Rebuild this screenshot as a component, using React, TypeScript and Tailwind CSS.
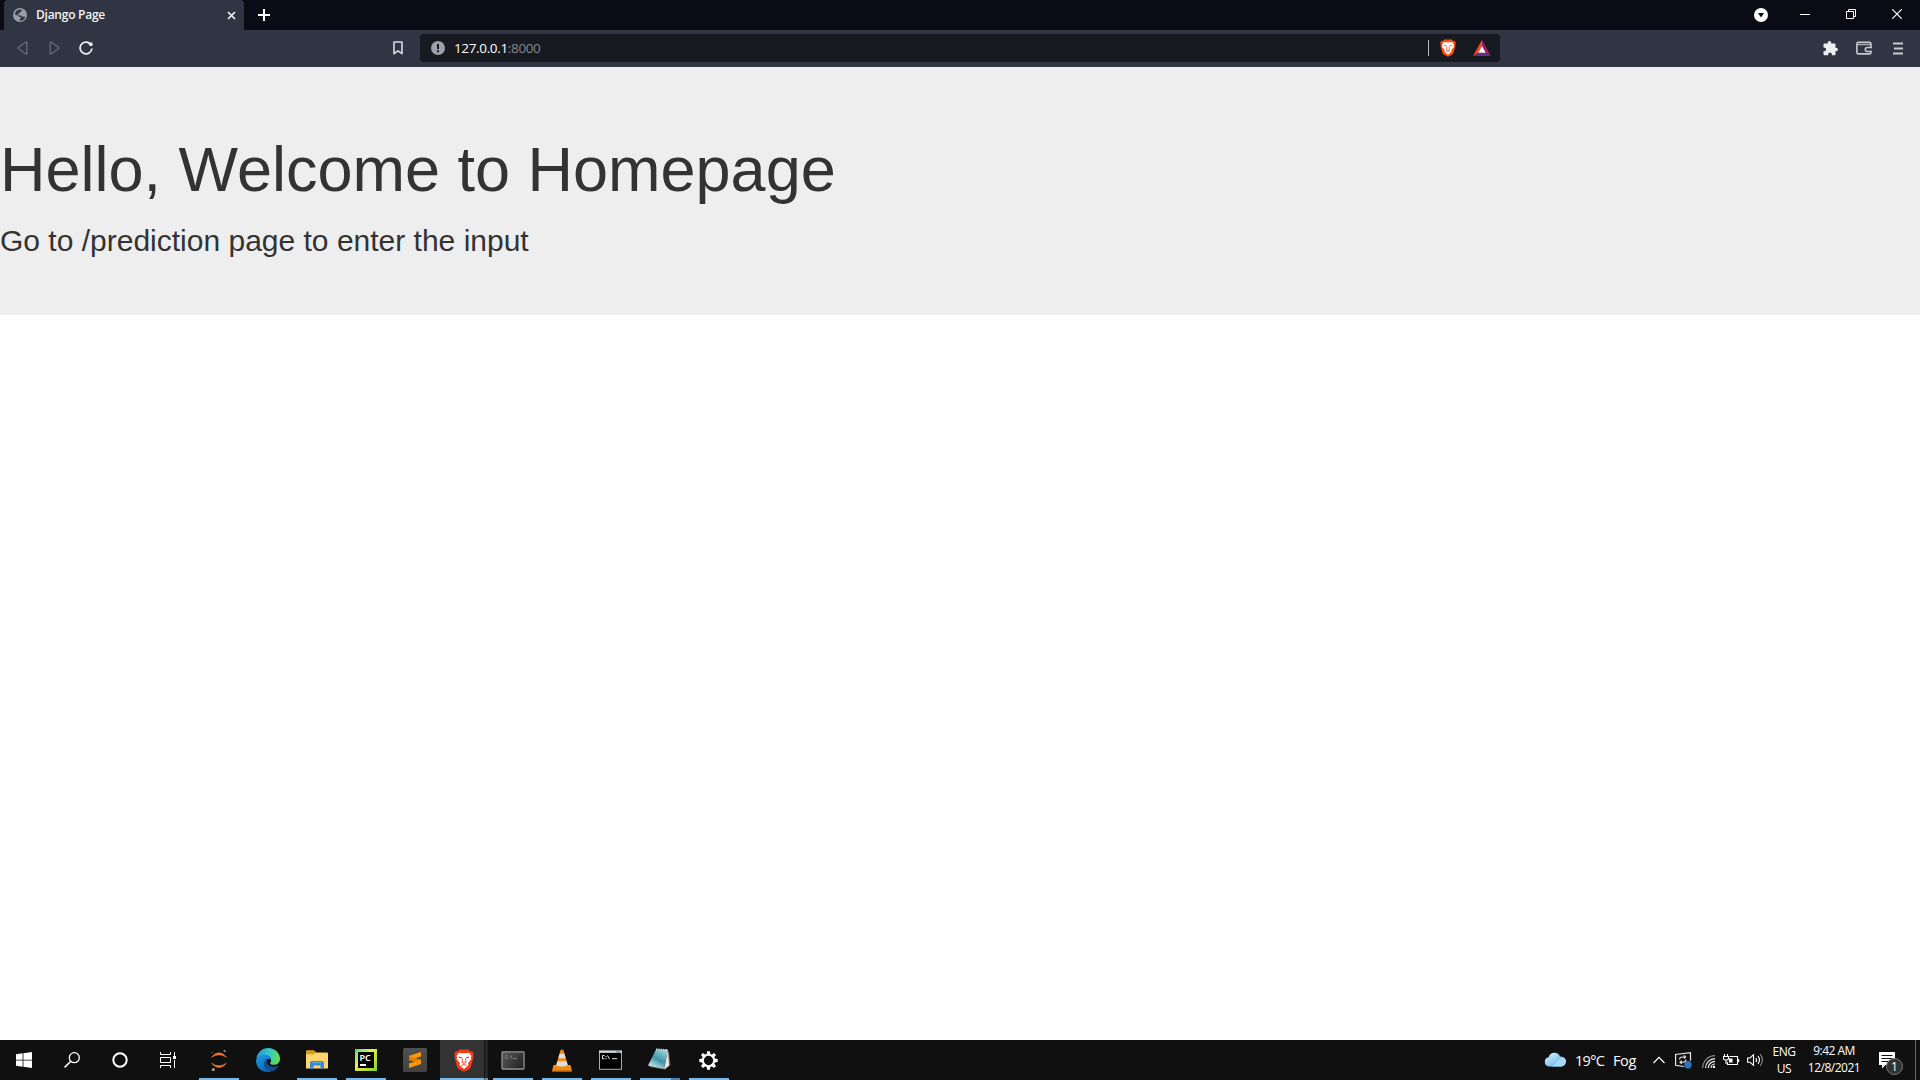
import type { ReactNode } from "react";

type IconProps = { w: number; h: number; className?: string; children: ReactNode };

function Icon({ w, h, className = "", children }: IconProps) {
  return (
    <svg width={w} height={h} viewBox={`0 0 ${w} ${h}`} fill="none" className={`shrink-0 ${className}`}>
      {children}
    </svg>
  );
}

function BraveLion({ w, h, className, flat }: { w: number; h: number; className?: string; flat?: boolean }) {
  const fur = flat ? "#fb4d0b" : "#f43a17";
  return (
    <svg width={w} height={h} viewBox="0 0 20 23" preserveAspectRatio="none" className={`shrink-0 ${className ?? ""}`}>
      <path d="M5.500 .5h9l2 2 1.800-.2 1.500 2.200-.8 2.200.5 1.800-2.600 9.200c-.4 1.200-1 1.800-2 2.500L10 22.800l-4.900-2.600c-1-.7-1.600-1.300-2-2.500L.5 8.500 1 6.700.2 4.500l1.500-2.200 1.800.2z" fill={fur} />
      <path d="M10 4l2.500.3 2.600-.6 2.400 3.400-.7 1.300.6 1.700-3.400 4.200.5 1.900L10 20l-4.500-3.800.5-1.900-3.400-4.200.6-1.700-.7-1.300 2.400-3.400 2.600.6z" fill="#fff" />
      <path d="M4.500 7.600l3.600.7-.3 1-2.500-.4zM15.500 7.600l-3.600.7.3 1 2.500-.4z" fill={fur} />
      <path d="M8.300 9.300l.3 2.200-.8 1.700 2.200 1.100 2.200-1.100-.8-1.700.3-2.200M10 14.300v1.200M7.300 16.700l2.700-1.200 2.700 1.200" fill="none" stroke={fur} strokeWidth=".9" />
    </svg>
  );
}

function TabStrip() {
  return (
    <div className="flex h-[30px] items-start bg-[#0b0b15]">
      <div className="ml-1 flex h-[30px] w-[240px] items-center rounded-t-[4px] bg-[#313442]">
        <Icon w={14} h={14} className="ml-[9px]">
          <circle cx="7" cy="7" r="7" fill="#9a9da5" />
          <path d="M5.500 1.700l2.800-.2.600 1-.8 1.200-1.500.5-.2 1.500-1.700.3.300 1.300 3 .1 1 1.200 2.700.2.500.8-1.300 1.900-1.900 1.100-2.500.1.200-1.500 1.300-1-.3-1.100-1.700-.4-1-1.300-1.500-.2-1.600-.9.300-1.200L3.800 2.500z" fill="#313442" />
        </Icon>
        <span className="ml-[9px] w-[150px] whitespace-nowrap text-[12px] font-semibold leading-[16px] tracking-[-0.250px] text-[#f3f4f5]">Django Page</span>
        <Icon w={9} h={9} className="ml-[41px]">
          <path d="M1 1l7 7M8 1L1 8" stroke="#f1f1f3" strokeWidth="1.700" />
        </Icon>
      </div>
      <Icon w={12} h={12} className="ml-[14px] mt-[9px]">
        <path d="M6 0v12M0 6h12" stroke="#fff" strokeWidth="2" />
      </Icon>
      <Icon w={14} h={14} className="ml-auto mt-[8px]">
        <circle cx="7" cy="7" r="7" fill="#fff" />
        <path d="M4 5h6L7 9.500z" fill="#0b0b15" />
      </Icon>
      <Icon w={10} h={10} className="ml-[32px] mt-[9px]">
        <path d="M0 5.500h10" stroke="#fff" />
      </Icon>
      <Icon w={10} h={10} className="ml-[36px] mt-[9px]">
        <path d="M.5 2.500h7v7h-7zM2.500 2.500v-2h7v7h-2" stroke="#fff" />
      </Icon>
      <Icon w={10} h={10} className="ml-[36px] mr-[18px] mt-[9px]">
        <path d="M.2.2l9.600 9.600M9.800.2L.2 9.800" stroke="#fff" strokeWidth="1.200" />
      </Icon>
    </div>
  );
}

function Toolbar() {
  return (
    <div className="flex h-[37px] items-center bg-[#313442] pb-px">
      <Icon w={11} h={14} className="ml-[16.500px]">
        <path d="M9.800 1.500v11q0 .8-.8.500L1.300 7.500q-.5-.5 0-1L9 1q.8-.3.800.5z" stroke="#696c78" strokeWidth="1.300" />
      </Icon>
      <Icon w={11} h={14} className="ml-[21px]">
        <path d="M1.200 1.500v11q0 .8.800.5l7.700-5.500q.5-.5 0-1L2 1q-.8-.3-.8.500z" stroke="#696c78" strokeWidth="1.300" />
      </Icon>
      <Icon w={14} h={14} className="ml-[19.500px]">
        <path d="M10.500 2.200A5.900 5.900 0 1 0 12.900 7.500" stroke="#f1f1f3" strokeWidth="1.700" />
        <path d="M9 1.500h3.600q1 0 1 1v1.300q0 1.200-1.200 1.200h-1.200q-1 0-1-1z" fill="#f1f1f3" />
      </Icon>
      <Icon w={10} h={14} className="ml-[300px]">
        <path d="M1 1h8v11.700l-4-2.900-4 2.900z" stroke="#d9dadd" strokeWidth="1.600" strokeLinejoin="round" />
      </Icon>
      <div className="ml-[17px] flex h-[28px] w-[1080px] items-center rounded-[4px] bg-[#181a22]">
        <Icon w={14} h={14} className="ml-[11px]">
          <circle cx="7" cy="7" r="7" fill="#9da0a8" />
          <path d="M7 3v5M7 9.300v2" stroke="#181a22" strokeWidth="2" />
        </Icon>
        <span className="ml-[9px] whitespace-nowrap text-[13.500px] leading-[18px] tracking-[-0.350px] text-white">
          127.0.0.1<span className="text-[#84868c]">:8000</span>
        </span>
        <div className="ml-auto h-4 w-px bg-[#b7b8bb]" />
        <BraveLion w={16} h={18} flat className="ml-[11px]" />
        <Icon w={18} h={16} className="ml-[17px] mr-[9px]">
          <path d="M9 0L0 16l5.500-3.300L9 6z" fill="#ff4724" />
          <path d="M9 0l9 16-5.500-3.300L9 6z" fill="#9e1f63" />
          <path d="M0 16h18l-5.500-3.300h-7z" fill="#662d91" />
          <path d="M9 6l3.700 6.700H5.300z" fill="#fff" />
        </Icon>
      </div>
      <Icon w={15} h={15} className="ml-auto">
        <path d="M.5 3.500q0-1 1-1h3.200q-.4-2.300 1.800-2.500 2.200.2 1.800 2.500h3.200q1 0 1 1v3.200q2.300-.2 2.500 1.700-.2 2-2.500 1.700v3.100q0 1-1 1H9q.1-2.500-2-2.600-2 .1-1.900 2.600H1.500q-1 0-1-1v-3Q3.200 10.400 3.200 8.300 3.200 6.400.5 6.500z" fill="#ededf0" />
      </Icon>
      <Icon w={16} h={14} className="ml-[18px]">
        <rect x=".9" y="1.400" width="14" height="11.500" rx="1.500" stroke="#c9cace" strokeWidth="1.600" />
        <path d="M1 3.700h14" stroke="#c9cace" strokeWidth="1" />
        <path d="M15.800 6.500h-4.500a2 2 0 0 0 0 4h4.500" fill="#313442" stroke="#c9cace" strokeWidth="1.600" />
      </Icon>
      <Icon w={10} h={13} className="ml-[21px] mr-[17px]">
        <path d="M0 1.500h10M1 6.500h9M0 11.500h10" stroke="#c9cace" strokeWidth="1.800" />
      </Icon>
    </div>
  );
}

function TaskButton({ open, children }: { open?: boolean; children: ReactNode }) {
  return (
    <div className={`flex h-10 w-10 shrink-0 items-center justify-center ${open ? "border-b-2 border-[#76b9ed] pt-[2px]" : ""}`}>
      {children}
    </div>
  );
}

function PinnedApps() {
  return (
    <div className="flex h-10 items-center gap-[9px]">
      <TaskButton open>
        <Icon w={16} h={22}>
          <path d="M.5 8.200Q8-.5 15.500 8.200 8 3.200.5 8.200zM.5 14.200Q8 23 15.500 14.200 8 19.300.5 14.200z" fill="#f37726" stroke="#f37726" strokeWidth=".6" />
          <circle cx="13.700" cy="2" r="1.300" fill="#767677" />
          <circle cx="1.200" cy="3.500" r=".7" fill="#616262" />
          <circle cx="2.300" cy="20.500" r="1.600" fill="#9e9e9e" />
        </Icon>
      </TaskButton>
      <TaskButton>
        <Icon w={24} h={24} className="ml-[-1px]">
          <defs>
            <linearGradient id="edgeTop" x1="2" y1="6" x2="23" y2="10" gradientUnits="userSpaceOnUse">
              <stop stopColor="#279bd9" />
              <stop offset=".5" stopColor="#36c7c7" />
              <stop offset="1" stopColor="#65dd54" />
            </linearGradient>
            <linearGradient id="edgeLow" x1="2" y1="8" x2="12" y2="24" gradientUnits="userSpaceOnUse">
              <stop stopColor="#1b96df" />
              <stop offset="1" stopColor="#0c61b6" />
            </linearGradient>
          </defs>
          <path d="M.4 10.500C1.300 4.300 6.200 0 12.200 0 19 0 24 5 24 11c0 3.500-2.800 5.800-6 5.800-2.200 0-4-.7-4-1.600 0-.5 1.100-1.100 1.100-3 0-2.600-2.500-5-6.100-5C5 7.200 1.500 9.300.4 10.500z" fill="url(#edgeTop)" />
          <path d="M.1 12.500C.3 9 4.500 6.700 8.800 6.800c3.700.1 6.200 2.500 6.300 4.900C13 10 9 11 8.500 14.600 8 19 11.500 23 15.500 23.400 7 26-.3 20 .1 12.500z" fill="url(#edgeLow)" />
          <path d="M11.200 10.900c-3.500 1.500-4.400 6.600-1.200 10 2.100 2.200 4.500 2.700 6.200 2.300 2.500-.7 4.700-2.500 6.200-4.700.3-.5 0-.8-.5-.6-4.900 2.200-12.300.1-10.700-7z" fill="#124f91" />
        </Icon>
      </TaskButton>
      <TaskButton open>
        <Icon w={22} h={20} className="ml-[-1px]">
          <path d="M0 1.500Q0 .5 1 .5h7l2 2h11q1 0 1 1V18H0z" fill="#f8c64d" />
          <path d="M0 1.500Q0 .5 1 .5h7l1.500 1.600L8 4.300H0z" fill="#d99a16" />
          <path d="M0 4.500h8l2-1.500h12v15.500H0z" fill="#ffd56c" />
          <path d="M4 19v-6q0-2 2-2h10q2 0 2 2v6h-3.500v-3.500h-7V19z" fill="#3b88d2" />
          <path d="M6 12.500h10" stroke="#65a9e5" />
        </Icon>
      </TaskButton>
      <TaskButton open>
        <div className="flex h-[22px] w-[22px] bg-linear-to-br from-[#20d789] via-[#e8ef4b] via-40% to-[#83d02d] p-[3px]">
          <div className="flex h-4 w-4 flex-col bg-black pl-[1.500px] pt-[1px]">
            <span className="font-['Noto_Sans'] text-[9px] font-semibold leading-[9px] text-white">PC</span>
            <div className="mt-[2px] h-[1.500px] w-[6px] bg-white" />
          </div>
        </div>
      </TaskButton>
      <TaskButton>
        <Icon w={24} h={24}>
          <defs>
            <linearGradient id="sublimeTile" x1="12" y1="0" x2="12" y2="24" gradientUnits="userSpaceOnUse">
              <stop stopColor="#505050" />
              <stop offset="1" stopColor="#414141" />
            </linearGradient>
          </defs>
          <rect width="24" height="24" rx="1.500" fill="url(#sublimeTile)" />
          <path d="M18 4v4.500L6 12.300V7.800z" fill="#ff9800" />
          <path d="M6 8.200l12 3.600v4L6 12.200z" fill="#e17d00" />
          <path d="M18 11.700v4.200L6 20v-4.400z" fill="#ff9800" />
        </Icon>
      </TaskButton>
      <div className="-mx-1 flex h-10 w-12 shrink-0">
        <div className="flex w-[44px] items-center justify-center border-b-2 border-[#76b9ed] bg-[#333333] pl-[4px] pt-[2px]">
          <BraveLion w={20} h={23} />
        </div>
        <div className="w-1 border-b-2 border-l border-b-[#5c93bd] border-l-[#171717] bg-[#262626]" />
      </div>
      <TaskButton open>
        <Icon w={24} h={19}>
          <defs>
            <linearGradient id="termFace" x1="2" y1="2" x2="22" y2="17" gradientUnits="userSpaceOnUse">
              <stop stopColor="#565656" />
              <stop offset=".5" stopColor="#3d3d3d" />
              <stop offset="1" stopColor="#202020" />
            </linearGradient>
          </defs>
          <rect x="1" y=".8" width="22" height="17.200" rx=".8" fill="url(#termFace)" stroke="#939393" strokeWidth="1.300" />
          <path d="M6.500 4.500H5v3h1.500M8 5v.6M8 7v.6M9.500 4.500l1.500 3M12 7.500h4" stroke="#909090" strokeWidth=".8" />
        </Icon>
      </TaskButton>
      <TaskButton open>
        <Icon w={20} h={23}>
          <path d="M1.500 16h17l1.400 5.700q.2.800-.7.800H.8q-.9 0-.7-.8z" fill="#f28b16" />
          <path d="M8.700.8h2.600l5 17q-6.300 3-12.600 0z" fill="#f58a16" />
          <path d="M7.600 4.700h4.800l1.200 4Q10 10.200 6.400 8.700zM5.400 12.200h9.200l1.200 4q-5.800 2.400-11.600 0z" fill="#dededb" />
          <path d="M.5 22h19" stroke="#b95c08" />
        </Icon>
      </TaskButton>
      <TaskButton open>
        <Icon w={23} h={20} className="ml-[-1px]">
          <rect x=".5" y=".8" width="22" height="18.500" fill="#000" stroke="#a8adb2" />
          <path d="M0 1.900h23" stroke="#d1d6dc" strokeWidth="2" />
          <path d="M17 1.900h4" stroke="#65727e" strokeWidth="1" />
          <path d="M5.500 5.500H3.500v3.300h2M7 6v1M7 8v1M8.500 5.500l2 3.500M13 8.700h5" stroke="#e5e5e5" strokeWidth="1" />
        </Icon>
      </TaskButton>
      <div className="flex h-10 w-10 shrink-0 flex-col">
        <div className="flex h-[38px] items-center pl-[8px]">
          <Icon w={23} h={22}>
            <defs>
              <linearGradient id="notePage" x1="17" y1="1" x2="6" y2="21" gradientUnits="userSpaceOnUse">
                <stop stopColor="#a5dce4" />
                <stop offset=".55" stopColor="#3d93a8" />
                <stop offset="1" stopColor="#d4eef2" />
              </linearGradient>
            </defs>
            <path d="M21 3l1.500 14-5 4.500L1 19z" fill="#6b5634" />
            <path d="M20 2l1.200 15.500-5.200 4z" fill="#dfe6e9" />
            <path d="M8 1.500L20 2l-4.500 19L0 17.500z" fill="url(#notePage)" />
            <path d="M8 1.300l12 .7" stroke="#d3dadd" strokeWidth="1.700" strokeDasharray="1.500 .8" />
          </Icon>
        </div>
        <div className="flex h-[2px]">
          <div className="w-[31px] bg-[#76b9ed]" />
          <div className="w-[9px] bg-[#5082a8]" />
        </div>
      </div>
      <TaskButton open>
        <svg width="19" height="19" viewBox="-9.500 -9.500 19 19" fill="none" className="ml-[-1px]">
          <circle r="5.700" stroke="#fff" strokeWidth="2.100" />
          {[0, 45, 90, 135, 180, 225, 270, 315].map((a) => (
            <path key={a} d="M-1.900-6l.5-3.200h2.800l.5 3.200z" fill="#fff" transform={`rotate(${a})`} />
          ))}
        </svg>
      </TaskButton>
    </div>
  );
}

function SystemTray() {
  return (
    <div className="ml-auto flex h-10 items-center text-white">
      <Icon w={22} h={15} className="-mt-px">
        <defs>
          <linearGradient id="cloudFill" x1="4" y1="0" x2="14" y2="15" gradientUnits="userSpaceOnUse">
            <stop stopColor="#d5efff" />
            <stop offset="1" stopColor="#65b4ea" />
          </linearGradient>
        </defs>
        <path d="M5 14.500a4.700 4.700 0 0 1-.3-9.300A6 6 0 0 1 16 4.500a5 5 0 0 1 1 10z" fill="url(#cloudFill)" />
        <path d="M8 14.500q3-1.500 5.500-5.500 3-3.300 6.500-3.500a5 5 0 0 1-3 9z" fill="#a7d9f7" />
      </Icon>
      <span className="ml-[9px] w-[38px] whitespace-nowrap pt-px text-[14.500px] leading-[20px] tracking-[-0.700px]">19°C</span>
      <span className="w-[40px] pt-px text-[14.500px] leading-[20px] tracking-[-0.400px]">Fog</span>
      <Icon w={12} h={8}>
        <path d="M.5 7L6 1.300 11.500 7" stroke="#fff" strokeWidth="1.200" />
      </Icon>
      <Icon w={17} h={17} className="ml-[10px]">
        <path d="M9 14.500L.6 13.300V2.500L15.500.7v8" stroke="#e8e8e8" strokeWidth="1.200" />
        <path d="M4.500 7.500q0-2.500 3-2.500h3M8.800 3.300l1.800 1.600-1.800 1.600M11 7.500q0 2.600-3 2.800H5M6.800 8.700L5 10.300l1.800 1.600" stroke="#e8e8e8" strokeWidth="1.100" />
        <circle cx="13" cy="12.800" r="3.700" fill="#2f73c5" />
      </Icon>
      <Icon w={13} h={13} className="ml-[10px] mt-[2px]">
        <path d="M.7 13A12.300 12.300 0 0 1 13 .7" stroke="#8a8a8a" strokeWidth="1.200" />
        <path d="M3.600 13A9.400 9.400 0 0 1 13 3.600M6.300 13A6.700 6.700 0 0 1 13 6.300M9 13a4 4 0 0 1 4-4" stroke="#f0f0f0" strokeWidth="1.200" />
        <circle cx="12" cy="12" r="1.300" fill="#fff" />
      </Icon>
      <Icon w={17} h={13} className="ml-[8px]">
        <path d="M6.500 2.500h8v8h-10V8" stroke="#fff" strokeWidth="1.100" />
        <path d="M15 5h1.200v3H15zM6 4.500h3.500v4H6z" fill="#fff" />
        <path d="M1.500 0v2.500M4.500 0v2.500M0 2.500h6M.5 3v1.500q0 1.500 2.500 1.500t2.500-1.500V3M3 6v4" stroke="#fff" strokeWidth="1.100" />
      </Icon>
      <Icon w={17} h={14} className="ml-[7px]">
        <path d="M.6 5h2.500L6.500 1.700v10.600L3.100 9.300H.6z" stroke="#fff" strokeWidth="1.100" />
        <path d="M8.800 5q1.600 2 0 4M11 3.200q3 3.800 0 7.600" stroke="#fff" strokeWidth="1.100" />
        <path d="M13.200 1.200q4.500 5.800 0 11.600" stroke="#8a8a8a" strokeWidth="1.100" />
      </Icon>
      <div className="ml-[5px] w-[30px] pb-px text-center text-[12px] leading-[17px] tracking-[-0.400px]">
        <div>ENG</div>
        <div>US</div>
      </div>
      <div className="ml-[7px] w-[56px] whitespace-nowrap pb-[2px] text-center text-[12px] leading-[17.500px] tracking-[-0.500px]">
        <div>9:42 AM</div>
        <div>12/8/2021</div>
      </div>
      <div className="relative ml-[17px] h-[24px] w-[24px]">
        <Icon w={16} h={17} className="absolute left-0 top-[4px]">
          <path d="M0 0h16v13H6.500L3 16.500V13H0z" fill="#fff" />
          <path d="M2.500 3.500h11M2.500 6.500h11M2.500 9.500h7" stroke="#111" />
        </Icon>
        <span className="absolute left-[7px] top-[10px] flex h-[17px] w-[17px] items-center justify-center rounded-full border border-[#777] bg-[#333] text-[12px] leading-none">1</span>
      </div>
      <div className="ml-[12px] mr-1 h-10 w-px bg-[#666]" />
    </div>
  );
}

function Taskbar() {
  return (
    <div className="flex h-10 items-center bg-[#101010]">
      <Icon w={16} h={16} className="ml-4">
        <path d="M0 2.300L6.600 1.300v6.400H0zM7.400 1.200L16 0v7.700H7.400zM0 8.400h6.600v6.400L0 13.800zM7.400 8.400H16V16l-8.600-1.200z" fill="#fff" />
      </Icon>
      <Icon w={16} h={16} className="ml-8">
        <circle cx="10.300" cy="5.700" r="5" stroke="#fff" strokeWidth="1.300" />
        <path d="M6.800 9.200L.6 15.400" stroke="#fff" strokeWidth="1.500" />
      </Icon>
      <Icon w={16} h={16} className="ml-8">
        <circle cx="8" cy="8" r="6.700" stroke="#fff" strokeWidth="2" />
      </Icon>
      <Icon w={16} h={16} className="ml-8">
        <path d="M.5 0v2.500h10V0M.5 16v-2.500h10V16M.5 5.500h10v5H.5zM14.500 0v4M14.500 8v8" stroke="#fff" />
        <path d="M13 4h3v3h-3z" fill="#fff" />
      </Icon>
      <div className="w-[23px]" />
      <PinnedApps />
      <SystemTray />
    </div>
  );
}

export default function App() {
  return (
    <div className="flex h-[1080px] w-[1920px] flex-col overflow-hidden bg-white font-['Open_Sans','Noto_Sans',sans-serif]">
      <TabStrip />
      <Toolbar />
      <main className="flex-1 font-['Liberation_Sans',Arial,sans-serif] text-[#333]">
        <div className="bg-[#eeeeee] py-12">
          <h1 className="pt-5 text-[63px] font-medium leading-[1.1]">Hello, Welcome to Homepage</h1>
          <h2 className="pb-2.5 pt-5 text-[30px] font-medium leading-[1.1]">Go to /prediction page to enter the input</h2>
        </div>
      </main>
      <Taskbar />
    </div>
  );
}
